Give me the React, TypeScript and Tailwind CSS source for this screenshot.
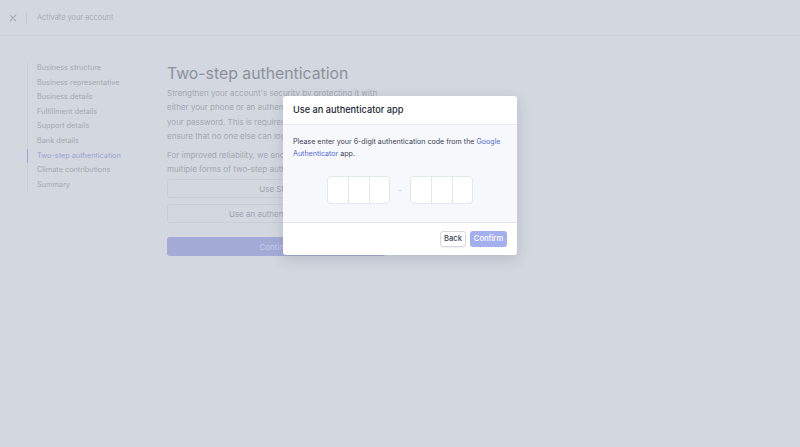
import React from "react";

const steps = [
  "Business structure",
  "Business representative",
  "Business details",
  "Fulfillment details",
  "Support details",
  "Bank details",
  "Two-step authentication",
  "Climate contributions",
  "Summary",
];

function CodeGroup() {
  return (
    <div className="flex h-[28px] w-[63px] rounded-[4px] border border-[#e3e8ee] bg-white">
      <div className="w-[21px] border-r border-[#e3e8ee]" />
      <div className="w-[21px] border-r border-[#e3e8ee]" />
      <div className="flex-1" />
    </div>
  );
}

export default function App() {
  const active = "Two-step authentication";

  return (
    <div className="relative h-[447px] w-[800px] overflow-hidden bg-[#d3d7df] font-['Inter',sans-serif]">
      {/* Top bar */}
      <div className="flex h-[36px] items-center border-b border-[#cdd1d9] pl-[9px]">
        <svg width="8" height="8" viewBox="0 0 10 10">
          <path d="M1.5 1.5l7 7M8.5 1.5l-7 7" stroke="#a6abb6" strokeWidth="1.4" strokeLinecap="round" />
        </svg>
        <div className="ml-[9px] h-[12px] w-px bg-[#c6cad3]" />
        <span className="ml-[10px] text-[7.4px] text-[#a7acb7]">Activate your account</span>
      </div>

      <div className="flex">
        {/* Sidebar */}
        <div className="w-[167px] shrink-0 pl-[27px] pt-[25px]">
          <div className="border-l border-[#cbcfd8]">
            {steps.map((s) => (
              <div
                key={s}
                className={`-ml-px h-[14.6px] whitespace-nowrap border-l pl-[9px] text-[7.3px] leading-[14.6px] ${
                  s === active ? "border-[#9ea7d8] text-[#9aa3d2]" : "border-transparent text-[#a4a9b5]"
                }`}
              >
                {s}
              </div>
            ))}
          </div>
        </div>

        {/* Main */}
        <div className="w-[219px] pt-[28px]">
          <h1 className="whitespace-nowrap text-[15.8px] leading-[20px] text-[#8c919d]">Two-step authentication</h1>
          <p className="mt-[2px] whitespace-nowrap text-[8px] leading-[14.4px] text-[#a4a9b4]">
            Strengthen your account&apos;s security by protecting it with
            <br />
            either your phone or an authenticator app in addition to
            <br />
            your password. This is required to help us
            <br />
            ensure that no one else can log in to your account.
          </p>
          <p className="mt-[4px] whitespace-nowrap text-[8px] leading-[14.4px] text-[#a4a9b4]">
            For improved reliability, we encourage you to set up
            <br />
            multiple forms of two-step authentication.
          </p>
          <div className="mt-[3px] flex h-[19px] items-center justify-center rounded-[3px] border border-[#c9cdd6] text-[8px] text-[#a0a5b1]">
            Use SMS
          </div>
          <div className="mt-[6px] flex h-[19px] items-center justify-center rounded-[3px] border border-[#c9cdd6] text-[8px] text-[#a0a5b1]">
            Use an authenticator app
          </div>
          <div className="mt-[14px] flex h-[19px] items-center justify-center rounded-[3px] bg-[#a3abd6] text-[8px] text-[#c7cceb]">
            Continue
          </div>
        </div>
      </div>

      {/* Modal */}
      <div className="absolute left-[283px] top-[96px] w-[234px] overflow-hidden rounded-[3px] bg-white shadow-[0_4px_14px_rgba(50,60,90,0.18)]">
        <div className="flex h-[29px] items-center border-b border-[#e6ebf1] px-[10px] text-[9.2px] font-medium text-[#1a1f36]">
          Use an authenticator app
        </div>
        <div className="h-[98px] border-b border-[#e3e8ee] bg-[#f6f8fb] px-[10px] pt-[11px]">
          <p className="text-[7.1px] leading-[11.5px] text-[#3c4257]">
            Please enter your 6-digit authentication code from the{" "}
            <span className="text-[#5469d4]">Google Authenticator</span> app.
          </p>
          <div className="mt-[17px] flex items-center justify-center gap-[8px]">
            <CodeGroup />
            <span className="text-[8px] text-[#c1c7d0]">-</span>
            <CodeGroup />
          </div>
        </div>
        <div className="flex h-[32px] items-center justify-end gap-[4px] px-[10px]">
          <button className="h-[16px] w-[26px] rounded-[3px] border border-[#d5dae1] bg-white text-[7.6px] font-medium leading-none text-[#3c4257] shadow-[0_1px_1px_rgba(0,0,0,0.06)]">
            Back
          </button>
          <button className="h-[16px] w-[37px] rounded-[3px] bg-[#a4aff0] text-[7.6px] font-medium leading-none text-white">
            Confirm
          </button>
        </div>
      </div>
    </div>
  );
}
